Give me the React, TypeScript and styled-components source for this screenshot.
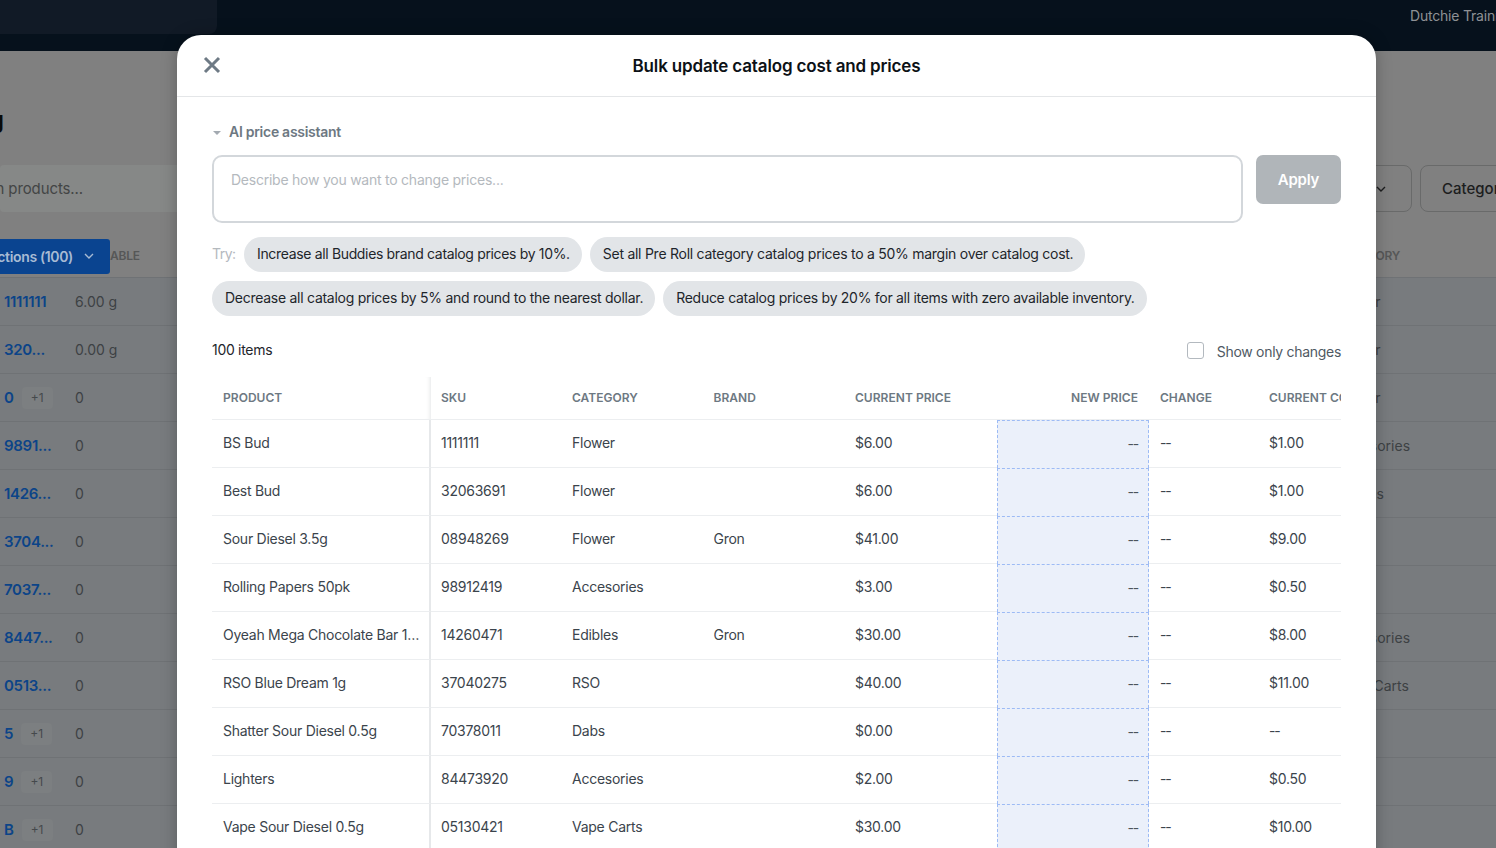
import React from "react";
import styled, { createGlobalStyle } from "styled-components";

const Global = createGlobalStyle`
  html, body { margin: 0; padding: 0; background: #808080; }
  body { font-family: Inter, "Liberation Sans", sans-serif; }
  * { box-sizing: border-box; }
`;

const Page = styled.div`
  position: relative;
  width: 1496px;
  height: 848px;
  overflow: hidden;
  background: #808080;
`;

const TopBar = styled.header`
  height: 51px;
  background: #06111c;
  display: flex;
  justify-content: space-between;
  align-items: flex-start;
`;
const TopSearch = styled.div`
  width: 217px;
  height: 34px;
  background: #111a26;
  border-bottom-right-radius: 8px;
`;
const Org = styled.div`
  width: 86px;
  padding-top: 7px;
  font-size: 14px;
  line-height: 18px;
  letter-spacing: -0.2px;
  color: #8e9195;
  white-space: nowrap;
  overflow: hidden;
`;

const HeadingClip = styled.div`
  height: 114px;
  padding-top: 53px;
  width: 4px;
  overflow: hidden;
  display: flex;
  justify-content: flex-end;
`;
const Heading = styled.h1`
  margin: 0;
  font-size: 24px;
  line-height: 32px;
  font-weight: 600;
  color: #0a0a0a;
  white-space: nowrap;
  flex-shrink: 0;
`;

const FilterBar = styled.div`
  display: grid;
  grid-template-columns: 1fr 100px 150px;
  gap: 8px;
  height: 47px;
  margin-right: -74px;
`;
const BgSearch = styled.div`
  background: #868887;
  border-radius: 4px;
  display: flex;
  align-items: center;
  overflow: hidden;
  font-size: 15px;
  letter-spacing: -0.1px;
  color: #434545;
`;
const BgSearchText = styled.span`
  margin-left: -45px;
  white-space: nowrap;
`;
const FilterButton = styled.div`
  border: 1px solid #696a6a;
  border-radius: 8px;
  display: flex;
  align-items: center;
  justify-content: flex-end;
  padding: 0 25px 0 21px;
  color: #1c1d1e;
  font-size: 15px;
  font-weight: 500;
  &:last-child { justify-content: flex-start; }
`;

const BgHeadRow = styled.div`
  height: 65px;
  padding-top: 27px;
  display: flex;
  align-items: flex-start;
  justify-content: space-between;
  position: relative;
`;
const ActionsButton = styled.div`
  width: 110px;
  height: 35px;
  background: #0a4490;
  border-radius: 0 3px 3px 0;
  display: flex;
  justify-content: flex-end;
  align-items: center;
  gap: 11px;
  padding-right: 16px;
  padding-bottom: 1px;
  overflow: hidden;
  color: #a8bbd4;
  font-size: 14px;
  font-weight: 600;
  letter-spacing: -0.35px;
  white-space: nowrap;
`;
const ActionsText = styled.span`
  flex-shrink: 0;
`;
const BgHeadLabel = styled.span`
  font-size: 12px;
  font-weight: 600;
  letter-spacing: -0.2px;
  color: #565757;
  line-height: 33px;
  white-space: nowrap;
`;
const BgHeadLeft = styled.div`
  display: flex;
  align-items: flex-start;
`;
const BgHeadRight = styled.div`
  width: 160px;
`;

const BgRow = styled.div`
  height: 48px;
  background: #787b7e;
  border-top: 1px solid #6f7275;
  display: grid;
  grid-template-columns: 71px 1fr 160px;
  align-items: center;
  padding-left: 4px;
  font-size: 14px;
  color: #3d4144;
`;
const BgId = styled.span`
  color: #0c4488;
  font-weight: 600;
  font-size: 15px;
  letter-spacing: -0.3px;
  display: flex;
  align-items: center;
  gap: 8px;
`;
const BgBadge = styled.span`
  width: 31px;
  height: 22px;
  background: #7c7f81;
  border-radius: 4px;
  font-weight: 400;
  font-size: 12px;
  letter-spacing: 0;
  color: #45494c;
  display: flex;
  align-items: center;
  justify-content: center;
`;

const Overlay = styled.div`
  position: absolute;
  top: 35px;
  left: 177px;
  width: 1199px;
  height: 900px;
  background: #fff;
  border-radius: 24px 24px 0 0;
  box-shadow: 0 0 16px rgba(0, 0, 0, 0.25);
`;
const ModalHeader = styled.div`
  height: 62px;
  border-bottom: 1px solid #e4e6e8;
  display: grid;
  grid-template-columns: 35px 1fr 35px;
  align-items: center;
  text-align: center;
  padding-left: 26px;
  padding-right: 26px;
`;
const CloseBtn = styled.div`
  width: 18px;
  height: 18px;
  margin-top: -2px;
  display: flex;
  align-items: center;
  justify-content: center;
`;
const Title = styled.h2`
  margin: 0;
  font-size: 17px;
  font-weight: 600;
  letter-spacing: -0.15px;
  color: #0c1116;
`;
const ModalBody = styled.div`
  padding: 24px 35px 0;
`;
const AiHead = styled.div`
  display: flex;
  align-items: center;
  gap: 8px;
  height: 20px;
  font-size: 14px;
  font-weight: 600;
  letter-spacing: -0.28px;
  color: #6d7882;
`;
const Caret = styled.span`
  width: 0;
  height: 0;
  margin-left: 1px;
  margin-top: 3px;
  border-left: 4px solid transparent;
  border-right: 4px solid transparent;
  border-top: 4px solid #a3aab1;
`;
const InputRow = styled.div`
  display: flex;
  gap: 13px;
  margin-top: 14px;
`;
const Prompt = styled.div`
  flex: 1;
  height: 68px;
  border: 2px solid #d3d7db;
  border-radius: 10px;
  padding: 14px 17px;
  font-size: 14px;
  line-height: 18px;
  letter-spacing: -0.24px;
  color: #b4b9be;
`;
const Apply = styled.div`
  width: 85px;
  height: 49px;
  border-radius: 7px;
  background: #b0b5b9;
  color: #fff;
  font-size: 15px;
  font-weight: 600;
  letter-spacing: -0.2px;
  display: flex;
  align-items: center;
  justify-content: center;
`;
const ChipArea = styled.div`
  display: flex;
  flex-direction: column;
  gap: 9px;
  margin-top: 14px;
`;
const ChipRow = styled.div`
  display: flex;
  align-items: center;
  gap: 8px;
`;
const TryLabel = styled.span`
  font-size: 14px;
  letter-spacing: -0.5px;
  color: #b4b9be;
  width: 24px;
  padding-bottom: 2px;
`;
const Chip = styled.div<{ $tracking: number }>`
  height: 35px;
  padding: 0 12px 2px 13px;
  border-radius: 18px;
  background: #e2e5e8;
  display: flex;
  align-items: center;
  font-size: 14px;
  letter-spacing: ${(p) => p.$tracking}px;
  color: #1e252b;
  white-space: nowrap;
`;
const SummaryRow = styled.div`
  display: flex;
  justify-content: space-between;
  align-items: center;
  height: 20px;
  margin-top: 24px;
`;
const Count = styled.span`
  font-size: 14px;
  letter-spacing: -0.3px;
  color: #1e252b;
  padding-bottom: 2px;
`;
const ToggleLabel = styled.label`
  display: flex;
  align-items: center;
  gap: 13px;
  font-size: 14px;
  letter-spacing: -0.3px;
  color: #4f5963;
`;
const Box = styled.span`
  width: 17px;
  height: 17px;
  border: 1.5px solid #b3b9bf;
  border-radius: 3px;
`;
const ToggleText = styled.span`
  margin-top: 3px;
`;

const TableWrap = styled.div`
  margin-top: 17px;
  overflow: hidden;
`;
const Table = styled.table`
  width: 1250px;
  table-layout: fixed;
  border-collapse: separate;
  border-spacing: 0;
`;
const Th = styled.th<{ $right?: boolean; $fixed?: boolean }>`
  height: 43px;
  padding: 0 11px 2px 10px;
  font-size: 12px;
  font-weight: 600;
  letter-spacing: 0.03px;
  color: #6d7882;
  text-align: ${(p) => (p.$right ? "right" : "left")};
  text-transform: uppercase;
  white-space: nowrap;
  overflow: hidden;
  border-bottom: 1.5px solid #eceef0;
  &:nth-child(1), &:nth-child(7), &:nth-child(8) { padding-left: 11px; }
  ${(p) => p.$fixed && "box-shadow: inset -5px 0 4px -4px rgba(110,120,130,0.18);"}
`;
const Td = styled.td<{ $fixed?: boolean }>`
  height: 48px;
  padding: 0 10px 2px;
  font-size: 14px;
  letter-spacing: -0.26px;
  color: #3b444c;
  white-space: nowrap;
  overflow: hidden;
  text-overflow: ellipsis;
  border-bottom: 1.5px solid #eceef0;
  &:nth-child(1), &:nth-child(7), &:nth-child(8) { padding-left: 11px; }
  ${(p) => p.$fixed && "border-right: 2px solid #e6e8ea; padding-right: 9px;"}
`;
const NewPriceTd = styled.td`
  height: 48px;
  padding: 0 10px 3px;
  font-size: 14px;
  text-align: right;
  color: #4b545c;
  background: #ebf0fa;
  border: 1px dashed #9dbbf5;
  border-bottom-width: 0;
`;
const Dash = styled.span`
  letter-spacing: -1.2px;
`;

const XIcon = () => (
  <svg width="18" height="18" viewBox="0 0 18 18" fill="none">
    <path d="M2 2l14 14M16 2L2 16" stroke="#6e7a85" strokeWidth="3" />
  </svg>
);
const Chevron = ({ color }: { color: string }) => (
  <svg width="10" height="6" viewBox="0 0 10 6" fill="none" style={{ flexShrink: 0 }}>
    <path d="M1 1l4 4 4-4" stroke={color} strokeWidth="1.4" />
  </svg>
);

const bgRows: { id: string; badge?: boolean; value: string; cat: string }[] = [
  { id: "1111111", value: "6.00 g", cat: "Flower" },
  { id: "320...", value: "0.00 g", cat: "Flower" },
  { id: "0", badge: true, value: "0", cat: "Flower" },
  { id: "9891...", value: "0", cat: "Accesories" },
  { id: "1426...", value: "0", cat: "Edibles" },
  { id: "3704...", value: "0", cat: "RSO" },
  { id: "7037...", value: "0", cat: "Dabs" },
  { id: "8447...", value: "0", cat: "Accesories" },
  { id: "0513...", value: "0", cat: "Vape Carts" },
  { id: "5", badge: true, value: "0", cat: "" },
  { id: "9", badge: true, value: "0", cat: "" },
  { id: "B", badge: true, value: "0", cat: "" },
];

const rows = [
  ["BS Bud", "1111111", "Flower", "", "$6.00", "$1.00"],
  ["Best Bud", "32063691", "Flower", "", "$6.00", "$1.00"],
  ["Sour Diesel 3.5g", "08948269", "Flower", "Gron", "$41.00", "$9.00"],
  ["Rolling Papers 50pk", "98912419", "Accesories", "", "$3.00", "$0.50"],
  ["Oyeah Mega Chocolate Bar 100mg", "14260471", "Edibles", "Gron", "$30.00", "$8.00"],
  ["RSO Blue Dream 1g", "37040275", "RSO", "", "$40.00", "$11.00"],
  ["Shatter Sour Diesel 0.5g", "70378011", "Dabs", "", "$0.00", "--"],
  ["Lighters", "84473920", "Accesories", "", "$2.00", "$0.50"],
  ["Vape Sour Diesel 0.5g", "05130421", "Vape Carts", "", "$30.00", "$10.00"],
];

const widths = [219, 131, 141.5, 141.5, 152, 152, 109, 204];

export default function App() {
  return (
    <Page>
      <Global />
      <TopBar>
        <TopSearch />
        <Org>Dutchie Training</Org>
      </TopBar>
      <HeadingClip>
        <Heading>Catalog</Heading>
      </HeadingClip>
      <FilterBar>
        <BgSearch>
          <BgSearchText>Search products...</BgSearchText>
        </BgSearch>
        <FilterButton>
          <Chevron color="#1c1d1e" />
        </FilterButton>
        <FilterButton>Categories</FilterButton>
      </FilterBar>
      <BgHeadRow>
        <BgHeadLeft>
          <ActionsButton>
            <ActionsText>Actions (100)</ActionsText>
            <Chevron color="#a8bbd4" />
          </ActionsButton>
          <BgHeadLabel>ABLE</BgHeadLabel>
        </BgHeadLeft>
        <BgHeadRight>
          <BgHeadLabel>CATEGORY</BgHeadLabel>
        </BgHeadRight>
      </BgHeadRow>
      {bgRows.map((r, i) => (
        <BgRow key={i}>
          <BgId>
            {r.id}
            {r.badge && <BgBadge>+1</BgBadge>}
          </BgId>
          <span>{r.value}</span>
          <span>{r.cat}</span>
        </BgRow>
      ))}

      <Overlay>
        <ModalHeader>
          <CloseBtn>
            <XIcon />
          </CloseBtn>
          <Title>Bulk update catalog cost and prices</Title>
          <span />
        </ModalHeader>
        <ModalBody>
          <AiHead>
            <Caret />
            AI price assistant
          </AiHead>
          <InputRow>
            <Prompt>Describe how you want to change prices...</Prompt>
            <Apply>Apply</Apply>
          </InputRow>
          <ChipArea>
            <ChipRow>
              <TryLabel>Try:</TryLabel>
              <Chip $tracking={-0.34}>Increase all Buddies brand catalog prices by 10%.</Chip>
              <Chip $tracking={-0.26}>Set all Pre Roll category catalog prices to a 50% margin over catalog cost.</Chip>
            </ChipRow>
            <ChipRow>
              <Chip $tracking={-0.27}>Decrease all catalog prices by 5% and round to the nearest dollar.</Chip>
              <Chip $tracking={-0.285}>Reduce catalog prices by 20% for all items with zero available inventory.</Chip>
            </ChipRow>
          </ChipArea>
          <SummaryRow>
            <Count>100 items</Count>
            <ToggleLabel>
              <Box />
              <ToggleText>Show only changes</ToggleText>
            </ToggleLabel>
          </SummaryRow>
          <TableWrap>
            <Table>
              <colgroup>
                {widths.map((w, i) => (
                  <col key={i} style={{ width: w }} />
                ))}
              </colgroup>
              <thead>
                <tr>
                  <Th $fixed>Product</Th>
                  <Th>SKU</Th>
                  <Th>Category</Th>
                  <Th>Brand</Th>
                  <Th>Current price</Th>
                  <Th $right>New price</Th>
                  <Th>Change</Th>
                  <Th>Current cost</Th>
                </tr>
              </thead>
              <tbody>
                {rows.map((r) => (
                  <tr key={r[1]}>
                    <Td $fixed>{r[0]}</Td>
                    <Td>{r[1]}</Td>
                    <Td>{r[2]}</Td>
                    <Td>{r[3]}</Td>
                    <Td>{r[4]}</Td>
                    <NewPriceTd>
                      <Dash>--</Dash>
                    </NewPriceTd>
                    <Td>
                      <Dash>--</Dash>
                    </Td>
                    <Td>{r[5] === "--" ? <Dash>--</Dash> : r[5]}</Td>
                  </tr>
                ))}
              </tbody>
            </Table>
          </TableWrap>
        </ModalBody>
      </Overlay>
    </Page>
  );
}
